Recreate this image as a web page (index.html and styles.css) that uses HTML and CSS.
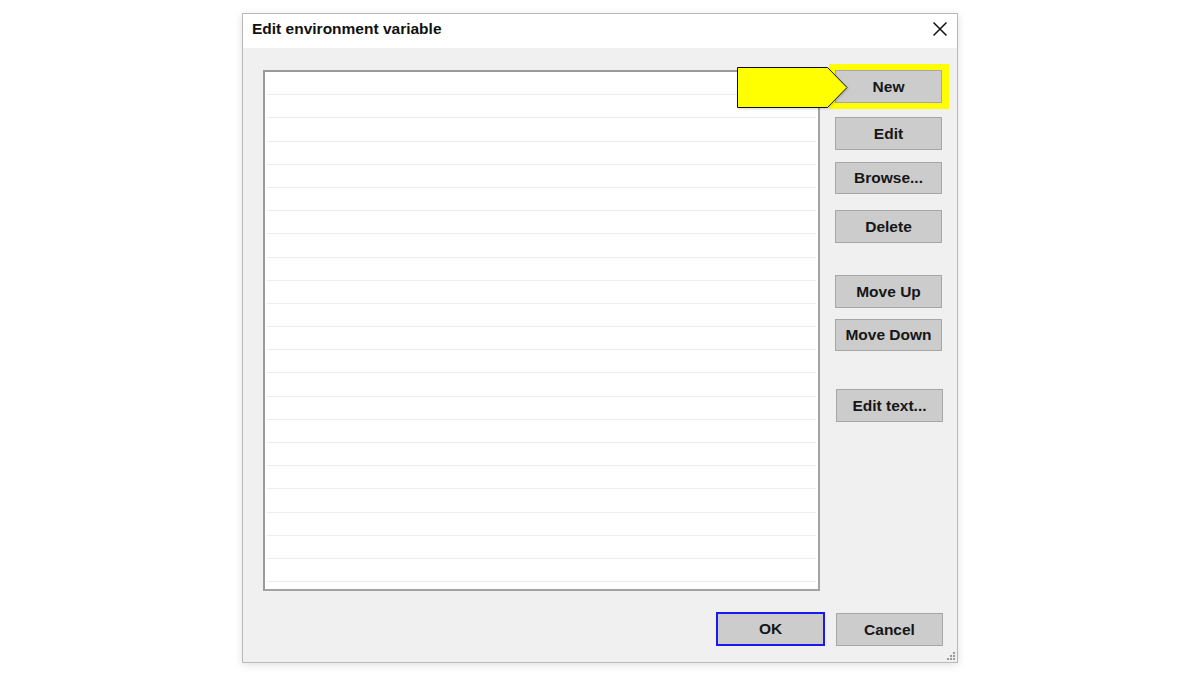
FILE: index.html
```html
<!DOCTYPE html>
<html>
<head>
<meta charset="utf-8">
<title>Edit environment variable</title>
<link rel="stylesheet" href="styles.css">
</head>
<body>
<div class="dialog">
  <div class="titlebar">
    <span class="title">Edit environment variable</span>
    <svg class="close" width="16" height="16" viewBox="0 0 16 16"><path d="M1.5 1.5 L14.5 14.5 M14.5 1.5 L1.5 14.5" stroke="#111" stroke-width="1.5" fill="none"/></svg>
  </div>
  <div class="content">
    <div class="main">
      <div class="list">
        <div class="row"></div><div class="row"></div><div class="row"></div><div class="row"></div>
        <div class="row"></div><div class="row"></div><div class="row"></div><div class="row"></div>
        <div class="row"></div><div class="row"></div><div class="row"></div><div class="row"></div>
        <div class="row"></div><div class="row"></div><div class="row"></div><div class="row"></div>
        <div class="row"></div><div class="row"></div><div class="row"></div><div class="row"></div>
        <div class="row"></div><div class="row"></div>
      </div>
      <div class="side">
        <div class="hl-wrap">
          <div class="highlight"></div>
          <button class="btn">New</button>
          <svg class="arrow" width="114" height="42" viewBox="0 0 114 42"><path d="M0.5 0.5 H90.5 L110 20.5 L90.5 40.5 H0.5 Z" fill="#ffff00" stroke="#111" stroke-width="1"/></svg>
        </div>
        <button class="btn g14">Edit</button>
        <button class="btn g12">Browse...</button>
        <button class="btn g16">Delete</button>
        <button class="btn g32">Move Up</button>
        <button class="btn g11">Move Down</button>
        <button class="btn g38 shift">Edit text...</button>
      </div>
    </div>
    <div class="footer">
      <button class="btn ok">OK</button>
      <button class="btn cancel">Cancel</button>
    </div>
  </div>
  <svg class="grip" width="10" height="10" viewBox="0 0 10 10" fill="#9a9a9a">
    <rect x="7" y="1" width="2" height="2"/>
    <rect x="4" y="4" width="2" height="2"/><rect x="7" y="4" width="2" height="2"/>
    <rect x="1" y="7" width="2" height="2"/><rect x="4" y="7" width="2" height="2"/><rect x="7" y="7" width="2" height="2"/>
  </svg>
</div>
</body>
</html>
```
FILE: styles.css
```css
* { box-sizing: border-box; }
html, body { margin: 0; padding: 0; background: #ffffff; }
body {
  width: 1200px;
  height: 675px;
  font-family: "Liberation Sans", Arial, sans-serif;
  overflow: hidden;
}
.dialog {
  position: relative;
  width: 716px;
  height: 650px;
  margin: 13px auto 0 242px;
  border: 1px solid #b8b8b8;
  background: #f0f0f0;
  box-shadow: 0 2px 8px rgba(0,0,0,0.12);
}
.titlebar {
  height: 34px;
  background: #ffffff;
  display: flex;
  align-items: flex-start;
  justify-content: space-between;
  padding: 6px 9px 0 9px;
}
.title {
  font-weight: bold;
  font-size: 15.5px;
  color: #111;
}
.close { display: block; margin-top: 1px; }
.content {
  padding: 22px 13px 0 20px;
}
.main {
  display: flex;
  align-items: flex-start;
}
.list {
  width: 557px;
  height: 521px;
  background: #ffffff;
  border: 2px solid #a3a3a3;
  border-top-color: #9a9a9a;
  border-left-color: #9a9a9a;
  overflow: hidden;
}
.row {
  height: 23.2px;
  margin: 0 2px;
  border-bottom: 1px solid #ececec;
}
.side {
  display: flex;
  flex-direction: column;
  margin-left: 15px;
}
.btn {
  width: 107px;
  height: 33px;
  background: #cccccc;
  border: 1px solid #a6a6a6;
  border-radius: 0;
  font-family: "Liberation Sans", Arial, sans-serif;
  font-weight: bold;
  font-size: 15.5px;
  color: #161616;
  padding: 0;
  display: block;
}
.g14 { margin-top: 14px; }
.g12 { margin-top: 12px; height: 32px; }
.g11 { margin-top: 11px; height: 32px; }
.g16 { margin-top: 16px; }
.g32 { margin-top: 32px; }
.g38 { margin-top: 38px; }
.shift { margin-left: 1px; }
.hl-wrap { position: relative; }
.hl-wrap .btn { position: relative; z-index: 2; }
.highlight {
  position: absolute;
  left: -6px;
  top: -6px;
  width: 120px;
  height: 45px;
  background: #ffff00;
  z-index: 1;
}
.arrow {
  position: absolute;
  left: -98px;
  top: -3px;
  z-index: 3;
  filter: drop-shadow(1px 1px 1px rgba(0,0,0,0.15));
}
.footer {
  display: flex;
  justify-content: flex-end;
  margin-top: 22px;
  gap: 11px;
  padding-right: 1px;
}
.ok {
  width: 109px;
  height: 34px;
  border: 2px solid #1a1aee;
  margin-top: -1px;
}
.cancel {
  width: 107px;
  height: 33px;
}
.grip {
  position: absolute;
  right: 1px;
  bottom: 1px;
}
```
